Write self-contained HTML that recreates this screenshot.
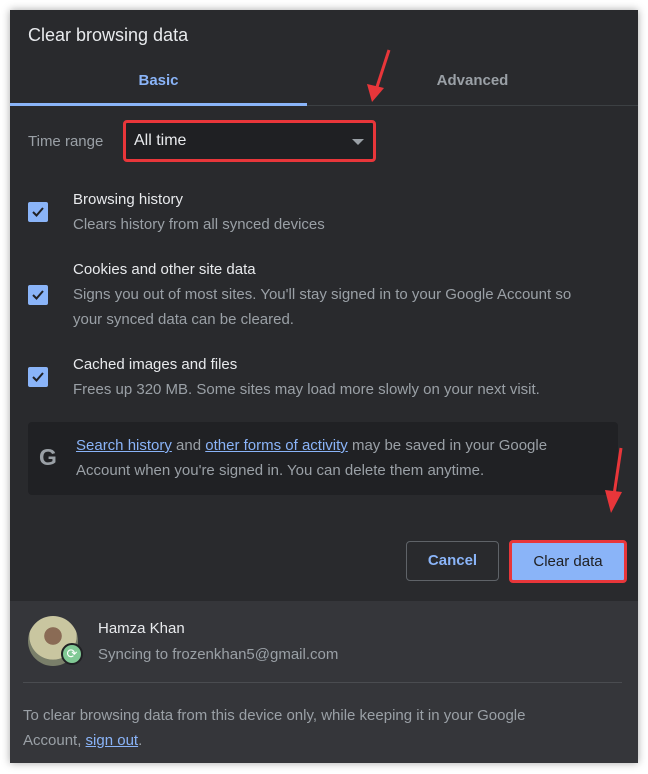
<!DOCTYPE html>
<html><head><meta charset="utf-8"><style>
*{margin:0;padding:0;box-sizing:border-box}
body{width:648px;height:774px;background:#fff;font-family:"Liberation Sans",sans-serif;position:relative;overflow:hidden}
.dlg{position:absolute;left:10px;top:10px;width:628px;height:753px;background:#292a2d;box-shadow:0 0 8px rgba(0,0,0,.35)}
.abs{position:absolute;white-space:nowrap}
.t{color:#e8eaed}
.s{color:#9aa0a6}
.cb{position:absolute;left:18px;width:20px;height:20px;background:#8ab4f8;border-radius:2px}
.cb svg{position:absolute;left:2px;top:2px}
.h{font-size:15px;color:#e8eaed}
.d{font-size:15px;color:#9aa0a6;line-height:25px}
a{color:#8ab4f8;text-decoration:underline}
</style></head><body>
<div class="dlg">
 <div class="abs t" style="left:18px;top:15px;font-size:18px">Clear browsing data</div>
 <div class="abs" style="left:0;top:62px;width:297px;text-align:center;color:#8ab4f8;font-size:15px;font-weight:bold">Basic</div>
 <div class="abs" style="left:297px;top:62px;width:331px;text-align:center;color:#9aa0a6;font-size:15px;font-weight:bold">Advanced</div>
 <div class="abs" style="left:0;top:95px;width:628px;height:1px;background:#3c4043"></div>
 <div class="abs" style="left:0;top:93px;width:297px;height:3px;background:#8ab4f8"></div>
 <div class="abs s" style="left:18px;top:123px;font-size:15px">Time range</div>
 <div class="abs" style="left:113px;top:110px;width:253px;height:42px;border:3px solid #e8363a;border-radius:4px;background:#1f2023"></div>
 <div class="abs t" style="left:124px;top:122px;font-size:16px">All time</div>
 <div class="abs" style="left:342px;top:129px;width:0;height:0;border-left:6px solid transparent;border-right:6px solid transparent;border-top:6px solid #9aa0a6"></div>

 <div class="cb" style="top:192px"><svg width="16" height="16"><path d="M3 8 L6.5 11.5 L13 4" stroke="#202124" stroke-width="2" fill="none"/></svg></div>
 <div class="abs h" style="left:63px;top:181px">Browsing history</div>
 <div class="abs d" style="left:63px;top:202px">Clears history from all synced devices</div>

 <div class="cb" style="top:275px"><svg width="16" height="16"><path d="M3 8 L6.5 11.5 L13 4" stroke="#202124" stroke-width="2" fill="none"/></svg></div>
 <div class="abs h" style="left:63px;top:251px">Cookies and other site data</div>
 <div class="abs d" style="left:63px;top:272px">Signs you out of most sites. You'll stay signed in to your Google Account so<br>your synced data can be cleared.</div>

 <div class="cb" style="top:357px"><svg width="16" height="16"><path d="M3 8 L6.5 11.5 L13 4" stroke="#202124" stroke-width="2" fill="none"/></svg></div>
 <div class="abs h" style="left:63px;top:346px">Cached images and files</div>
 <div class="abs d" style="left:63px;top:367px">Frees up 320 MB. Some sites may load more slowly on your next visit.</div>

 <div class="abs" style="left:18px;top:412px;width:590px;height:73px;background:#202124;border-radius:4px"></div>
 <div class="abs" style="left:29px;top:434px;font-size:23px;font-weight:bold;color:#9aa0a6">G</div>
 <div class="abs d" style="left:66px;top:423px"><a>Search history</a> and <a>other forms of activity</a> may be saved in your Google<br>Account when you're signed in. You can delete them anytime.</div>

 <div class="abs" style="left:396px;top:531px;width:93px;height:40px;border:1px solid #5f6368;border-radius:4px;color:#8ab4f8;font-size:15px;font-weight:bold;text-align:center;line-height:38px">Cancel</div>
 <div class="abs" style="left:499px;top:530px;width:118px;height:43px;border:3px solid #e8363a;border-radius:4px;background:#8ab4f8;color:#202124;font-size:15px;text-align:center;line-height:37px">Clear data</div>

 <div class="abs" style="left:0;top:591px;width:628px;height:162px;background:#35363a"></div>
 <div class="abs" style="left:18px;top:606px;width:50px;height:50px;border-radius:50%;background:radial-gradient(circle at 50% 40%,#8a6b55 0 22%,#c9c6a0 23% 60%,#7a7f6a 61%)"></div>
 <div class="abs" style="left:51px;top:633px;width:22px;height:22px;border-radius:50%;background:#81c995;border:2px solid #202124;color:#fff;font-size:13px;text-align:center;line-height:18px">⟳</div>
 <div class="abs t" style="left:88px;top:610px;font-size:15px">Hamza Khan</div>
 <div class="abs s" style="left:88px;top:636px;font-size:15px">Syncing to frozenkhan5@gmail.com</div>
 <div class="abs" style="left:13px;top:672px;width:599px;height:1px;background:#4a4c50"></div>
 <div class="abs d" style="left:13px;top:693px;line-height:25px">To clear browsing data from this device only, while keeping it in your Google<br>Account, <a>sign out</a>.</div>
</div>
<svg class="abs" style="left:0;top:0" width="648" height="774">
 <path d="M389 50 L376 90" stroke="#e8363a" stroke-width="3"/>
 <path d="M367 84 L372 102 L384 88 Z" fill="#e8363a"/>
 <path d="M621 448 L614 495" stroke="#e8363a" stroke-width="3"/>
 <path d="M605 490 L611 513 L622 492 Z" fill="#e8363a"/>
</svg>
</body></html>
